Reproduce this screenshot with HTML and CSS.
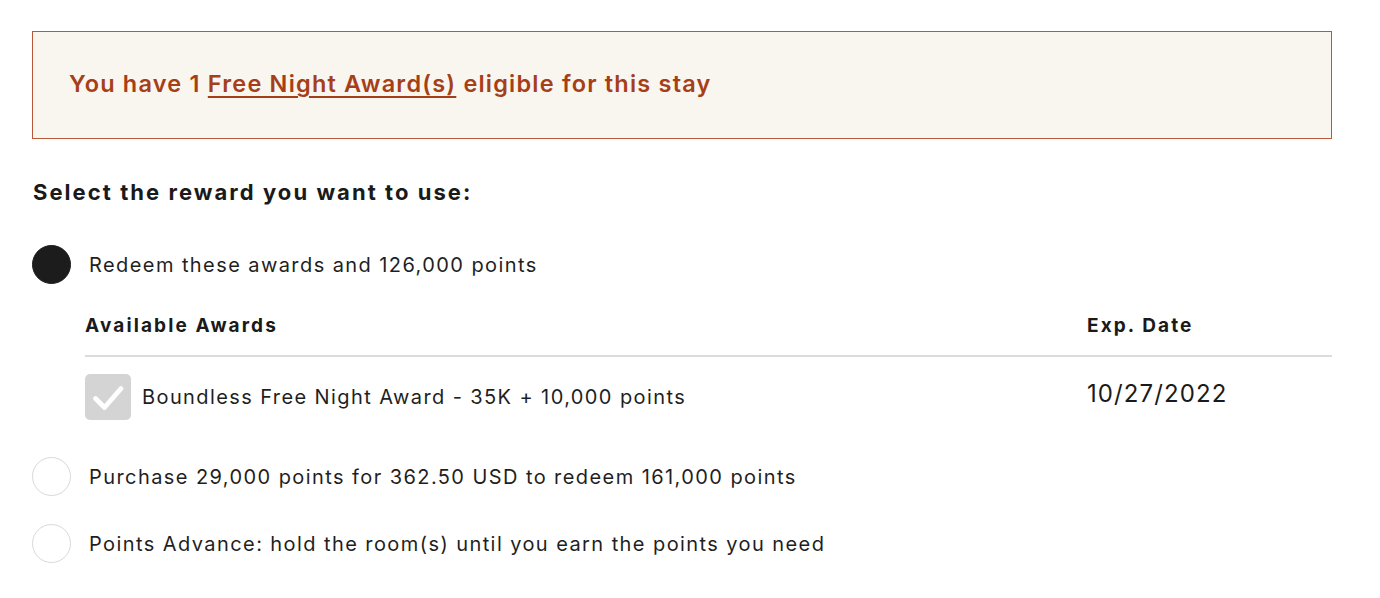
FILE: index.html
```html
<!DOCTYPE html>
<html>
<head>
<meta charset="utf-8">
<link rel="stylesheet" href="styles.css">
</head>
<body>
<div class="page">
  <div class="banner">
    <p class="banner-text">You have 1 <a href="#" class="banner-link">Free Night Award(s)</a> eligible for this stay</p>
  </div>
  <h2 class="heading">Select the reward you want to use:</h2>
  <div class="option option-first">
    <span class="radio radio-on"></span>
    <span class="option-label">Redeem these awards and 126,000 points</span>
  </div>
  <div class="awards">
    <div class="awards-head">
      <span class="col-name">Available Awards</span>
      <span class="col-date">Exp. Date</span>
    </div>
    <div class="awards-row">
      <div class="col-name award-name">
        <span class="checkbox">
          <svg width="46" height="46" viewBox="0 0 46 46"><path d="M10.5 24.5 L19.5 33.5 L36 14.5" fill="none" stroke="#fff" stroke-width="4.8" stroke-linecap="round" stroke-linejoin="round"/></svg>
        </span>
        <span class="award-label">Boundless Free Night Award - 35K + 10,000 points</span>
      </div>
      <span class="col-date award-date">10/27/2022</span>
    </div>
  </div>
  <div class="option">
    <span class="radio"></span>
    <span class="option-label">Purchase 29,000 points for 362.50 USD to redeem 161,000 points</span>
  </div>
  <div class="option option-last">
    <span class="radio"></span>
    <span class="option-label">Points Advance: hold the room(s) until you earn the points you need</span>
  </div>
</div>
</body>
</html>
```
FILE: styles.css
```css
html, body {
  margin: 0;
  padding: 0;
  background: #ffffff;
}
body {
  font-family: "Inter", "Open Sans", sans-serif;
  color: #1f1f1f;
}
.page {
  width: 1300px;
  padding: 31px 0 0 32px;
}
.banner {
  height: 106px;
  border: 1px solid #b9573a;
  background: #f9f6f0;
  display: flex;
  align-items: center;
  padding-left: 36px;
}
.banner-text {
  margin: 0;
  font-size: 23.5px;
  line-height: 30px;
  font-weight: 600;
  letter-spacing: 1.2px;
  color: #a63f17;
  padding-bottom: 2px;
}
.banner-link {
  color: #a63f17;
  text-decoration: underline;
  text-underline-offset: 4px;
  text-decoration-thickness: 2px;
}
.heading {
  margin: 38px 0 0 1px;
  font-size: 22px;
  font-weight: 700;
  line-height: 30px;
  letter-spacing: 2.05px;
  color: #1a1a1a;
}
.option {
  display: flex;
  align-items: center;
  gap: 18px;
  margin-top: 29px;
  height: 39px;
}
.option-first {
  margin-top: 38px;
}
.option-last {
  margin-top: 28px;
}
.radio {
  box-sizing: border-box;
  width: 39px;
  height: 39px;
  border-radius: 50%;
  border: 1.5px solid #d9d9d9;
  background: #fff;
  flex: none;
}
.radio-on {
  background: #1c1c1c;
  border-color: #1c1c1c;
}
.option-label {
  font-size: 20px;
  line-height: 30px;
  letter-spacing: 1.42px;
  color: #1f1f1f;
}
.awards {
  margin-left: 53px;
  margin-top: 27px;
  margin-bottom: 37px;
}
.awards-head {
  display: flex;
  align-items: center;
  line-height: 30px;
  padding-bottom: 14px;
  border-bottom: 2px solid #dcdcdc;
  font-size: 19px;
  font-weight: 700;
  letter-spacing: 2.1px;
  color: #1a1a1a;
}
.col-name {
  flex: 1;
}
.col-date {
  width: 245px;
}
.awards-row {
  display: flex;
  align-items: flex-start;
  padding-top: 17px;
}
.award-name {
  display: flex;
  align-items: center;
  gap: 11px;
}
.checkbox {
  width: 46px;
  height: 46px;
  border-radius: 5px;
  background: #d4d4d4;
  flex: none;
  display: block;
}
.checkbox svg {
  display: block;
}
.award-label {
  font-size: 20px;
  line-height: 30px;
  letter-spacing: 1.4px;
  color: #1f1f1f;
}
.award-date {
  font-size: 24px;
  color: #1a1a1a;
  line-height: 40px;
  letter-spacing: 1.1px;
}
```
